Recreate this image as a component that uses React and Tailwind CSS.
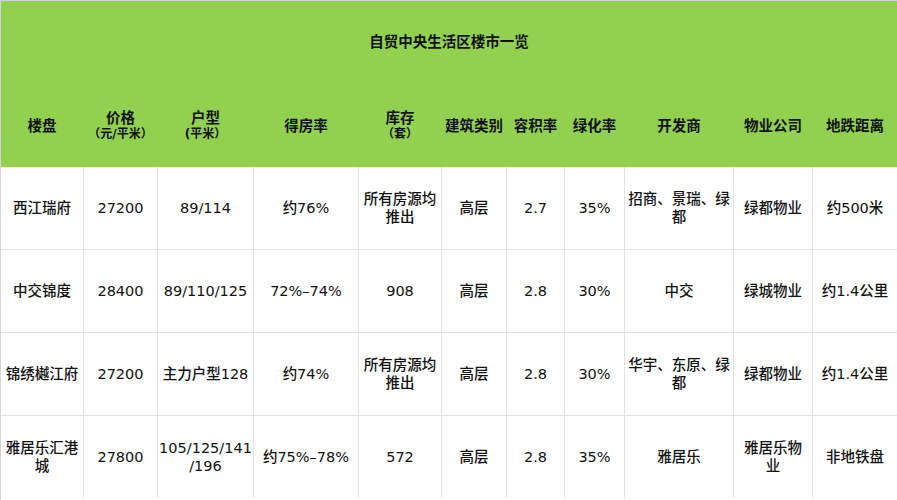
import React from 'react';

const cols = 'grid-cols-[82px_73px_95px_104px_82px_64px_57px_59px_108px_78px_84px]';

const headers = [
  { title: '楼盘' },
  { title: '价格', sub: '（元/平米）' },
  { title: '户型', sub: '(平米）' },
  { title: '得房率' },
  { title: '库存', sub: '（套）' },
  { title: '建筑类别' },
  { title: '容积率' },
  { title: '绿化率' },
  { title: '开发商' },
  { title: '物业公司' },
  { title: '地跌距离' },
];

// \n marks a hand-placed line break (the number list has no natural break point)
const rows = [
  ['西江瑞府', '27200', '89/114', '约76%', '所有房源均推出', '高层', '2.7', '35%', '招商、景瑞、绿都', '绿都物业', '约500米'],
  ['中交锦度', '28400', '89/110/125', '72%–74%', '908', '高层', '2.8', '30%', '中交', '绿城物业', '约1.4公里'],
  ['锦绣樾江府', '27200', '主力户型128', '约74%', '所有房源均推出', '高层', '2.8', '30%', '华宇、东原、绿都', '绿都物业', '约1.4公里'],
  ['雅居乐汇港城', '27800', '105/125/141\n/196', '约75%–78%', '572', '高层', '2.8', '35%', '雅居乐', '雅居乐物业', '非地铁盘'],
];

const font = { fontFamily: '"DejaVu Sans", "Noto Sans CJK SC", sans-serif' };

export default function App() {
  return (
    <div
      className="w-[897px] h-[500px] bg-white border-t border-l border-[#d4d4d4] overflow-hidden text-[14.5px] text-[#111]"
      style={font}
    >
      {/* green title + header block */}
      <div className="bg-[#92d050] font-bold text-[#111]">
        <div className="h-[83px] flex items-center justify-center">自贸中央生活区楼市一览</div>
        <div className={`grid ${cols} gap-x-px h-[83px]`}>
          {headers.map((h) => (
            <div key={h.title} className="flex flex-col items-center justify-center text-center leading-[16px]">
              <span>{h.title}</span>
              {h.sub && <span className="text-[12px]">{h.sub}</span>}
            </div>
          ))}
        </div>
      </div>

      {/* data rows */}
      <div className={`grid ${cols} auto-rows-[82px] gap-px bg-[#e3e3e3]`}>
        {rows.map((r, i) =>
          r.map((cell, j) => (
            <div
              key={`${i}-${j}`}
              className="bg-white flex items-center justify-center text-center px-[3px] leading-[18px] font-medium whitespace-pre-line"
            >
              {cell}
            </div>
          ))
        )}
      </div>
    </div>
  );
}
